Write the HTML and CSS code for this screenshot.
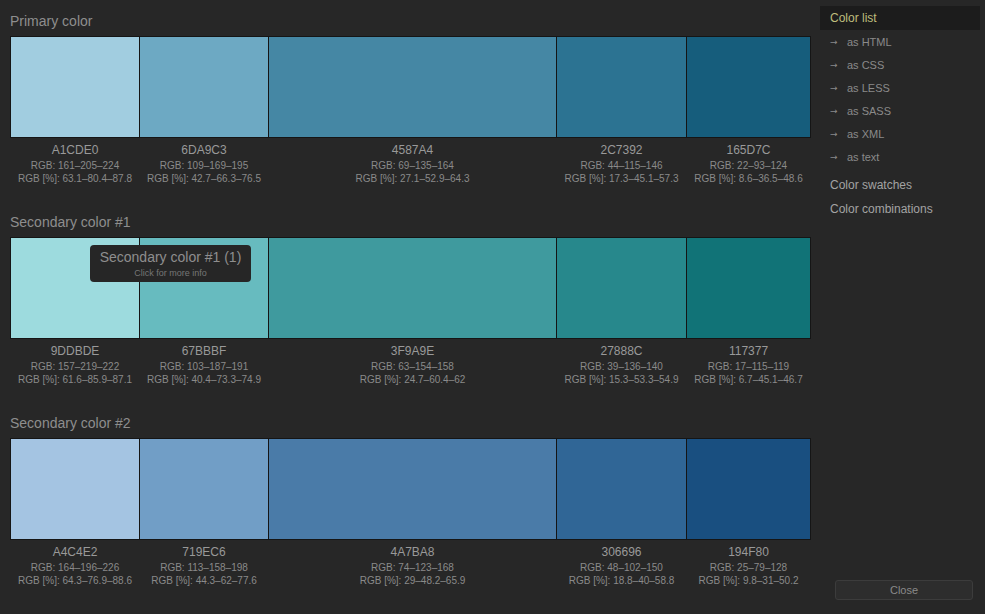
FILE: index.html
```html
<!DOCTYPE html>
<html>
<head>
<meta charset="utf-8">
<link rel="stylesheet" href="styles.css">
</head>
<body>
<div class="page">
  <main class="main">
    <section class="group">
      <h2 class="group-title">Primary color</h2>
      <div class="swatches">
        <div class="sw" style="background:#A1CDE0"></div>
        <div class="sw" style="background:#6DA9C3"></div>
        <div class="sw" style="background:#4587A4"></div>
        <div class="sw" style="background:#2C7392"></div>
        <div class="sw" style="background:#165D7C"></div>
      </div>
      <div class="labels">
        <div class="lab"><div class="hex">A1CDE0</div><div class="rgb">RGB: 161–205–224</div><div class="rgb">RGB [%]: 63.1–80.4–87.8</div></div>
        <div class="lab"><div class="hex">6DA9C3</div><div class="rgb">RGB: 109–169–195</div><div class="rgb">RGB [%]: 42.7–66.3–76.5</div></div>
        <div class="lab"><div class="hex">4587A4</div><div class="rgb">RGB: 69–135–164</div><div class="rgb">RGB [%]: 27.1–52.9–64.3</div></div>
        <div class="lab"><div class="hex">2C7392</div><div class="rgb">RGB: 44–115–146</div><div class="rgb">RGB [%]: 17.3–45.1–57.3</div></div>
        <div class="lab"><div class="hex">165D7C</div><div class="rgb">RGB: 22–93–124</div><div class="rgb">RGB [%]: 8.6–36.5–48.6</div></div>
      </div>
    </section>
    <section class="group">
      <h2 class="group-title">Secondary color #1</h2>
      <div class="swatches">
        <div class="sw" style="background:#9DDBDE"></div>
        <div class="sw" style="background:#67BBBF"></div>
        <div class="sw" style="background:#3F9A9E"></div>
        <div class="sw" style="background:#27888C"></div>
        <div class="sw" style="background:#117377"></div>
      </div>
      <div class="tooltip">
        <div class="tip-title">Secondary color #1 (1)</div>
        <div class="tip-sub">Click for more info</div>
      </div>
      <div class="labels">
        <div class="lab"><div class="hex">9DDBDE</div><div class="rgb">RGB: 157–219–222</div><div class="rgb">RGB [%]: 61.6–85.9–87.1</div></div>
        <div class="lab"><div class="hex">67BBBF</div><div class="rgb">RGB: 103–187–191</div><div class="rgb">RGB [%]: 40.4–73.3–74.9</div></div>
        <div class="lab"><div class="hex">3F9A9E</div><div class="rgb">RGB: 63–154–158</div><div class="rgb">RGB [%]: 24.7–60.4–62</div></div>
        <div class="lab"><div class="hex">27888C</div><div class="rgb">RGB: 39–136–140</div><div class="rgb">RGB [%]: 15.3–53.3–54.9</div></div>
        <div class="lab"><div class="hex">117377</div><div class="rgb">RGB: 17–115–119</div><div class="rgb">RGB [%]: 6.7–45.1–46.7</div></div>
      </div>
    </section>
    <section class="group">
      <h2 class="group-title">Secondary color #2</h2>
      <div class="swatches">
        <div class="sw" style="background:#A4C4E2"></div>
        <div class="sw" style="background:#719EC6"></div>
        <div class="sw" style="background:#4A7BA8"></div>
        <div class="sw" style="background:#306696"></div>
        <div class="sw" style="background:#194F80"></div>
      </div>
      <div class="labels">
        <div class="lab"><div class="hex">A4C4E2</div><div class="rgb">RGB: 164–196–226</div><div class="rgb">RGB [%]: 64.3–76.9–88.6</div></div>
        <div class="lab"><div class="hex">719EC6</div><div class="rgb">RGB: 113–158–198</div><div class="rgb">RGB [%]: 44.3–62–77.6</div></div>
        <div class="lab"><div class="hex">4A7BA8</div><div class="rgb">RGB: 74–123–168</div><div class="rgb">RGB [%]: 29–48.2–65.9</div></div>
        <div class="lab"><div class="hex">306696</div><div class="rgb">RGB: 48–102–150</div><div class="rgb">RGB [%]: 18.8–40–58.8</div></div>
        <div class="lab"><div class="hex">194F80</div><div class="rgb">RGB: 25–79–128</div><div class="rgb">RGB [%]: 9.8–31–50.2</div></div>
      </div>
    </section>
  </main>
  <aside class="side">
    <nav class="menu">
      <div class="menu-item active">Color list</div>
      <div class="sub first-sub"><span class="arrow">→</span><span>as HTML</span></div>
      <div class="sub"><span class="arrow">→</span><span>as CSS</span></div>
      <div class="sub"><span class="arrow">→</span><span>as LESS</span></div>
      <div class="sub"><span class="arrow">→</span><span>as SASS</span></div>
      <div class="sub"><span class="arrow">→</span><span>as XML</span></div>
      <div class="sub"><span class="arrow">→</span><span>as text</span></div>
      <div class="menu-item first-plain">Color swatches</div>
      <div class="menu-item">Color combinations</div>
    </nav>
    <button class="close">Close</button>
  </aside>
</div>
</body>
</html>
```

FILE: styles.css
```css
html, body {
  margin: 0;
  padding: 0;
  background: #272727;
  height: 100%;
  overflow: hidden;
}
body {
  font-family: "Liberation Sans", Arial, sans-serif;
  color: #8c8c8c;
}
.page {
  display: flex;
  height: 614px;
}
.main {
  width: 801px;
  padding-left: 10px;
  padding-right: 9px;
  flex: none;
}
.group {
  position: relative;
  padding-top: 13px;
  height: 188px;
}
.group-title {
  margin: 0 0 6px 0;
  font-size: 14px;
  line-height: 17px;
  font-weight: normal;
  color: #8e8e8e;
}
.swatches {
  display: grid;
  grid-template-columns: 128px 128px 287px 129px 123px;
  gap: 1px;
  padding: 1px;
  background: #151515;
  height: 100px;
}
.sw {
  height: 100px;
}
.labels {
  display: grid;
  grid-template-columns: 128px 128px 287px 129px 123px;
  gap: 1px;
  padding: 0 1px;
  margin-top: 5px;
  text-align: center;
}
.lab {
  white-space: nowrap;
}
.hex {
  font-size: 12px;
  line-height: 14px;
  color: #999;
  margin-bottom: 2px;
}
.rgb {
  font-size: 10px;
  line-height: 13px;
  color: #8a8a8a;
}
.tooltip {
  position: absolute;
  left: 80px;
  top: 44px;
  width: 161px;
  height: 37px;
  box-sizing: border-box;
  background: #262626;
  border-radius: 4px;
  text-align: center;
  padding-top: 4px;
}
.tip-title {
  font-size: 14px;
  line-height: 16px;
  color: #8e8e8e;
}
.tip-sub {
  font-size: 9px;
  line-height: 12px;
  margin-top: 2px;
  color: #767676;
}
.side {
  width: 160px;
  flex: none;
  display: flex;
  flex-direction: column;
  padding-top: 6px;
  box-sizing: border-box;
  height: 614px;
}
.menu {
  display: flex;
  flex-direction: column;
}
.menu-item {
  font-size: 12px;
  line-height: 24px;
  padding-left: 10px;
  color: #a3a3a3;
}
.menu-item.active {
  background: #1c1c1c;
  color: #bfbd7c;
}
.menu-item.first-plain {
  margin-top: 4px;
}
.sub {
  font-size: 11px;
  line-height: 23px;
  height: 23px;
  padding-left: 10px;
  color: #8a8a8a;
  overflow: hidden;
}
.sub.first-sub {
  margin-top: 1px;
}
.arrow {
  display: inline-block;
  width: 11px;
  margin-right: 6px;
  font-family: "DejaVu Sans", sans-serif;
  font-size: 9px;
  line-height: 10px;
  vertical-align: 1px;
}
.close {
  margin-top: auto;
  margin-bottom: 14px;
  margin-left: 15px;
  width: 138px;
  height: 20px;
  background: #2d2d2d;
  border: 1px solid #3c3c3c;
  border-radius: 3px;
  font-family: "Liberation Sans", Arial, sans-serif;
  font-size: 11px;
  color: #8a8a8a;
  padding: 0;
}
```
